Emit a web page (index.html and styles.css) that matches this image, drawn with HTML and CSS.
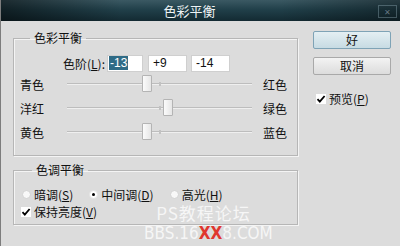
FILE: index.html
```
<!DOCTYPE html>
<html lang="zh-CN">
<head>
    <meta charset="UTF-8">
    <meta name="viewport" content="width=device-width, initial-scale=1.0">
    <title>色彩平衡</title>
    <link rel="stylesheet" href="styles.css">
</head>
<body>
    <div class="window">
        <div class="titlebar">
            <span class="title">色彩平衡</span>
            <span class="close">✕</span>
        </div>

        <div class="content">
            <div class="main">
                <!-- 色彩平衡 -->
                <fieldset class="group group-color">
                    <legend>色彩平衡</legend>
                    <div class="levels">
                        <span class="levels-label">色阶(<u>L</u>):</span>
                        <span class="num num-first"><span class="selected">-13</span></span>
                        <span class="num num-second">+9</span>
                        <span class="num num-third">-14</span>
                    </div>
                    <div class="slider-row">
                        <span class="slabel">青色</span>
                        <div class="track"><span class="thumb" style="left: 43.5%"></span></div>
                        <span class="rlabel">红色</span>
                    </div>
                    <div class="slider-row">
                        <span class="slabel">洋红</span>
                        <div class="track"><span class="thumb" style="left: 54.5%"></span></div>
                        <span class="rlabel">绿色</span>
                    </div>
                    <div class="slider-row">
                        <span class="slabel">黄色</span>
                        <div class="track"><span class="thumb" style="left: 43%"></span></div>
                        <span class="rlabel">蓝色</span>
                    </div>
                </fieldset>

                <!-- 色调平衡 -->
                <fieldset class="group group-tone">
                    <legend>色调平衡</legend>
                    <div class="radio-row">
                        <span class="option"><span class="radio"></span>暗调(<u>S</u>)</span>
                        <span class="option"><span class="radio checked"></span>中间调(<u>D</u>)</span>
                        <span class="option"><span class="radio"></span>高光(<u>H</u>)</span>
                    </div>
                    <div class="check-row">
                        <span class="check">
                            <svg width="10" height="10" viewBox="0 0 10 10"><path d="M1.5 5.2 L3.8 7.6 L8.6 2" fill="none" stroke="#000" stroke-width="1.8"/></svg>
                        </span>
                        保持亮度(<u>V</u>)
                    </div>
                </fieldset>
            </div>

            <div class="side">
                <div class="btn btn-default">好</div>
                <div class="btn">取消</div>
                <div class="check-row preview">
                    <span class="check">
                        <svg width="10" height="10" viewBox="0 0 10 10"><path d="M1.5 5.2 L3.8 7.6 L8.6 2" fill="none" stroke="#000" stroke-width="1.8"/></svg>
                    </span>
                    预览(<u>P</u>)
                </div>
            </div>
        </div>

        <!-- 水印 -->
        <div class="watermark">
            <div class="wm-top">PS教程论坛</div>
            <div class="wm-bottom">BBS.16<span class="wm-red">XX</span>8.COM</div>
        </div>
    </div>
</body>
</html>
```

FILE: styles.css
```
body {
    margin: 0;
    padding: 0;
    background-color: #ffffff;
    font-family: "Noto Sans CJK SC", sans-serif;
    font-size: 12px;
    color: #111;
}
.window {
    position: relative;
    width: 400px;
    height: 246px;
    background-color: #dcdcdc;
    border-left: 1px solid #7d7d7d;
    box-sizing: border-box;
    overflow: hidden;
}
.titlebar {
    height: 21px;
    display: flex;
    align-items: center;
    justify-content: center;
    padding-right: 22px;
    background:
        linear-gradient(to right, rgba(0, 0, 0, 0.5), rgba(0, 0, 0, 0) 30%, rgba(0, 0, 0, 0) 70%, rgba(0, 0, 0, 0.35)),
        linear-gradient(#3b5963, #21404a 45%, #132a32);
    position: relative;
}
.title {
    color: #eef3f5;
    font-size: 13px;
    line-height: 16px;
    letter-spacing: 0;
}
.close {
    position: absolute;
    right: 3px;
    top: 5px;
    width: 17px;
    height: 11px;
    border: 1px solid rgba(160, 190, 200, 0.35);
    color: rgba(200, 220, 225, 0.45);
    font-size: 8px;
    line-height: 11px;
    text-align: center;
}
.content {
    display: flex;
    padding-left: 12px;
}
.main {
    width: 285px;
}
/* Grupos */
.group {
    margin: 10px 0 0 0;
    padding: 0;
    min-width: 0;
    border: 1px solid #b6b6b6;
    box-shadow: inset 1px 1px 0 #f4f4f4, 1px 1px 0 #f4f4f4;
}
.group legend {
    margin-left: 10px;
    padding: 0 4px;
    line-height: 14px;
}
.group-color {
    padding: 10px 0 11px 6px;
}
.group-tone {
    margin-top: 7px;
    padding: 9px 0 4px 8px;
}
.levels {
    display: flex;
    align-items: center;
    height: 17px;
    line-height: 15px;
}
.levels-label {
    margin-left: 43px;
    margin-right: 2px;
}
.num {
    height: 17px;
    box-sizing: border-box;
    border: 1px solid #cfcfcf;
    background-color: #fff;
    padding-left: 4px;
    line-height: 15px;
    font-family: "Liberation Sans", sans-serif;
    font-size: 12px;
}
.num-first {
    width: 36px;
    padding-left: 1px;
}
.num-second {
    width: 39px;
    margin-left: 5px;
}
.num-third {
    width: 39px;
    margin-left: 4px;
}
.selected {
    display: inline-block;
    background-color: #2f6b86;
    color: #fff;
    padding: 0 1px;
    line-height: 14px;
}
.slider-row {
    display: flex;
    align-items: center;
    height: 24px;
    line-height: 15px;
}
.slabel {
    width: 47px;
}
.track {
    position: relative;
    width: 185px;
    height: 24px;
}
.track::before {
    content: "";
    position: absolute;
    left: 0;
    right: 0;
    top: 11px;
    height: 1px;
    background-color: #bdbdbd;
    box-shadow: 0 1px 0 #efefef;
}
.track::after {
    content: "";
    position: absolute;
    left: 92px;
    top: 10px;
    width: 2px;
    height: 4px;
    background-color: #c2c2c2;
}
.thumb {
    position: absolute;
    top: 3px;
    width: 10px;
    height: 17px;
    margin-left: -5px;
    box-sizing: border-box;
    border: 1px solid #b4b4b4;
    border-radius: 1px;
    background: linear-gradient(to right, #fbfbfb, #e6e6e6);
    z-index: 1;
}
.rlabel {
    margin-left: 11px;
}
/* Opções */
.radio-row {
    display: flex;
    align-items: center;
    height: 17px;
    line-height: 15px;
}
.option {
    display: flex;
    align-items: center;
    margin-right: 16px;
}
.radio {
    width: 9px;
    height: 9px;
    box-sizing: border-box;
    border: 1px solid #d2d2d2;
    border-radius: 50%;
    background-color: #f8f8f8;
    margin-right: 3px;
    position: relative;
}
.radio.checked {
    background-color: #fff;
    border-color: #e2e2e2;
}
.radio.checked::after {
    content: "";
    position: absolute;
    left: 2px;
    top: 2px;
    width: 3px;
    height: 3px;
    border-radius: 50%;
    background-color: #000;
}
.check-row {
    display: flex;
    align-items: center;
    height: 17px;
    line-height: 15px;
}
.group-tone .check-row {
    margin-left: -1px;
}
.check {
    width: 10px;
    height: 10px;
    background-color: #fff;
    margin-right: 3px;
    display: flex;
}
/* Botões */
.side {
    margin-left: 15px;
    width: 78px;
}
.btn {
    height: 18px;
    box-sizing: border-box;
    margin-top: 8px;
    border: 1px solid #a9a9a9;
    border-radius: 2px;
    background: linear-gradient(#f3f3f3, #dcdcdc);
    text-align: center;
    line-height: 16px;
}
.btn-default {
    margin-top: 10px;
    border-color: #7fa3b6;
    background: linear-gradient(#e4eff3, #c7dbe3);
}
.preview {
    margin-top: 15px;
    margin-left: 3px;
}
/* Marca d'água */
.watermark {
    position: absolute;
    left: 143px;
    top: 203px;
    width: 116px;
    text-align: center;
    color: rgba(255, 255, 255, 0.75);
    line-height: 20px;
}
.wm-top {
    font-size: 17px;
    letter-spacing: 1px;
    padding-left: 3px;
}
.wm-bottom {
    font-family: "DejaVu Sans Condensed", "Liberation Sans Narrow", sans-serif;
    font-size: 17px;
    font-stretch: condensed;
    letter-spacing: 0;
}
.wm-red {
    color: #e0362e;
    font-weight: bold;
}
```
